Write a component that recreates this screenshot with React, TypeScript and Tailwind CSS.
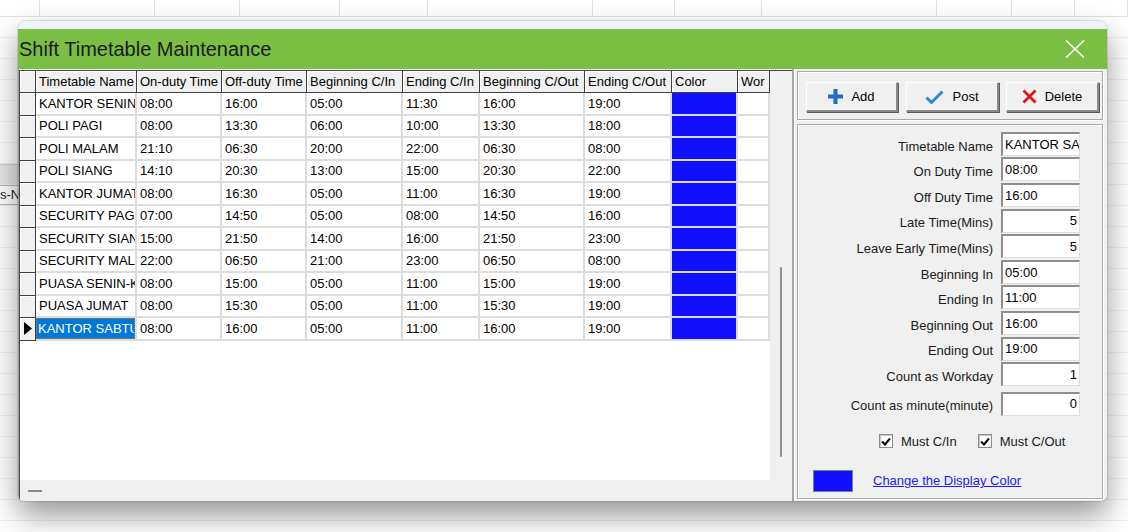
import React from "react";

const BG_COLS = [
  "w-[40px]",
  "w-[115px]",
  "w-[85px]",
  "w-[100px]",
  "w-[88px]",
  "w-[165px]",
  "w-[82px]",
  "w-[87px]",
  "w-[175px]",
  "w-[75px]",
  "w-[63px]",
  "w-[53px]",
];

const HEADERS = [
  "Timetable Name",
  "On-duty Time",
  "Off-duty Time",
  "Beginning C/In",
  "Ending C/In",
  "Beginning C/Out",
  "Ending C/Out",
  "Color",
  "Wor",
];

// lebar kolom grid, urut sama dengan HEADERS
const COL_W = [
  "w-[101px]",
  "w-[85px]",
  "w-[85px]",
  "w-[96px]",
  "w-[77px]",
  "w-[105px]",
  "w-[87px]",
  "w-[66px]",
  "w-[32px]",
];

const ROWS = [
  ["KANTOR SENIN", "08:00", "16:00", "05:00", "11:30", "16:00", "19:00"],
  ["POLI PAGI", "08:00", "13:30", "06:00", "10:00", "13:30", "18:00"],
  ["POLI MALAM", "21:10", "06:30", "20:00", "22:00", "06:30", "08:00"],
  ["POLI SIANG", "14:10", "20:30", "13:00", "15:00", "20:30", "22:00"],
  ["KANTOR JUMAT", "08:00", "16:30", "05:00", "11:00", "16:30", "19:00"],
  ["SECURITY PAGI", "07:00", "14:50", "05:00", "08:00", "14:50", "16:00"],
  ["SECURITY SIANG", "15:00", "21:50", "14:00", "16:00", "21:50", "23:00"],
  ["SECURITY MALAM", "22:00", "06:50", "21:00", "23:00", "06:50", "08:00"],
  ["PUASA SENIN-KAMIS", "08:00", "15:00", "05:00", "11:00", "15:00", "19:00"],
  ["PUASA JUMAT", "08:00", "15:30", "05:00", "11:00", "15:30", "19:00"],
  ["KANTOR SABTU", "08:00", "16:00", "05:00", "11:00", "16:00", "19:00"],
];

const FIELDS = [
  { label: "Timetable Name", value: "KANTOR SABTU", num: false },
  { label: "On Duty Time", value: "08:00", num: false },
  { label: "Off Duty Time", value: "16:00", num: false },
  { label: "Late Time(Mins)", value: "5", num: true },
  { label: "Leave Early Time(Mins)", value: "5", num: true },
  { label: "Beginning In", value: "05:00", num: false },
  { label: "Ending In", value: "11:00", num: false },
  { label: "Beginning Out", value: "16:00", num: false },
  { label: "Ending Out", value: "19:00", num: false },
  { label: "Count as Workday", value: "1", num: true },
];

const HEAD =
  "shrink-0 h-full bg-[#f0f0f0] border-r border-b border-[#404040] shadow-[inset_1px_1px_0_#ffffff] flex items-center overflow-hidden whitespace-nowrap";
const CELL_BASE =
  "shrink-0 h-full border-r-2 border-b-2 border-[#dcdcdc] flex items-center overflow-hidden whitespace-nowrap";
const CELL = `${CELL_BASE} pl-[3px]`;
const GROUP =
  "border border-[#a9a9a9] shadow-[inset_1px_1px_0_#ffffff,1px_1px_0_#ffffff]";
const BTN =
  "h-[30px] flex items-center justify-center gap-[8px] bg-[#f0f0f0] border-t border-l border-t-white border-l-white border-r-2 border-b-2 border-r-[#8a8a8a] border-b-[#8a8a8a] shadow-[1px_1px_0_#5a5a5a] text-[13px] text-black";
const INPUT =
  "w-[79px] h-[24px] bg-white border-t-2 border-l-2 border-r border-b border-t-[#8e8e8e] border-l-[#8e8e8e] border-r-[#dedede] border-b-[#dedede] flex items-center overflow-hidden whitespace-nowrap text-[13px] text-black";

function Background() {
  return (
    <div className="absolute inset-0 flex flex-col bg-white">
      <div className="flex h-[17px] shrink-0">
        {BG_COLS.map((w, i) => (
          <div key={i} className={`${w} shrink-0 border-r border-b border-[#e1e1e1]`} />
        ))}
      </div>
      {Array.from({ length: 24 }).map((_, r) => (
        <div key={r} className="flex h-[21px] shrink-0 border-b border-[#f1f1f1]">
          <div
            className={`w-[40px] shrink-0 h-full ${
              r === 7 ? "bg-[#e6e6e6] border-t border-[#d0d0d0]" : ""
            } ${r === 8 ? "border-t border-b border-[#b5b5b5] text-[13px] text-[#222] flex items-center" : ""}`}
          >
            {r === 8 ? "s-No" : null}
          </div>
        </div>
      ))}
    </div>
  );
}

function Grid() {
  return (
    <div className="w-[750px] h-[409px] bg-white flex flex-col overflow-hidden text-[13px] text-black">
      <div className="flex h-[22px] shrink-0">
        <div className={`w-[16px] ${HEAD}`} />
        {HEADERS.map((h, i) => (
          <div key={h} className={`${COL_W[i]} ${HEAD} pl-[3px]`}>
            {h}
          </div>
        ))}
      </div>
      {ROWS.map((row, r) => {
        const last = r === ROWS.length - 1;
        return (
          <div key={r} className="flex h-[22.5px] shrink-0">
            <div className={`w-[16px] ${HEAD} justify-center`}>
              {last && (
                <svg width="8" height="13" viewBox="0 0 8 13">
                  <polygon points="0,0 8,6.5 0,13" fill="#000" />
                </svg>
              )}
            </div>
            {row.map((v, c) =>
              last && c === 0 ? (
                <div key={c} className={`${COL_W[c]} ${CELL_BASE}`}>
                  <div className="w-full h-full bg-[#0078d7] text-white border border-dotted border-[#c27a3a] flex items-center pl-[1px] overflow-hidden">
                    {v}
                  </div>
                </div>
              ) : (
                <div key={c} className={`${COL_W[c]} ${CELL}`}>
                  {v}
                </div>
              )
            )}
            <div className={`${COL_W[7]} ${CELL} bg-[#1010ff]`} />
            <div className={`${COL_W[8]} ${CELL}`} />
          </div>
        );
      })}
    </div>
  );
}

function Checkbox({ label }: { label: string }) {
  return (
    <div className="flex items-center gap-[8px]">
      <div className="w-[14px] h-[14px] bg-white border border-[#8a8a8a] shadow-[inset_1px_1px_0_#c8c8c8] flex items-center justify-center">
        <svg width="10" height="9" viewBox="0 0 10 9">
          <path d="M1 4.5 L4 7.5 L9 1.5" stroke="#000" strokeWidth="2" fill="none" />
        </svg>
      </div>
      <span className="text-[13px] text-[#1a1a1a]">{label}</span>
    </div>
  );
}

function RightPanel() {
  return (
    <div className="w-[315px] h-full border-l-2 border-l-[#a6a6a6] shadow-[inset_1px_0_0_#ffffff] pl-[3px] pr-[4px] pt-[2px] pb-[2px] flex flex-col">
      <div className={`${GROUP} h-[49px] shrink-0 pl-[8px] pt-[10px] flex items-start`}>
        <button className={`${BTN} w-[92px]`}>
          <svg width="15" height="15" viewBox="0 0 15 15">
            <rect x="5.5" y="0" width="4" height="15" fill="#1c6dd0" />
            <rect x="0" y="5.5" width="15" height="4" fill="#1c6dd0" />
          </svg>
          <span>Add</span>
        </button>
        <button className={`${BTN} w-[93px] ml-[8px]`}>
          <svg width="19" height="14" viewBox="0 0 19 14">
            <path d="M1.5 7.5 L6.5 12.5 L17.5 1.5" stroke="#3186de" strokeWidth="3" fill="none" strokeLinejoin="round" />
          </svg>
          <span>Post</span>
        </button>
        <button className={`${BTN} w-[93px] ml-[7px]`}>
          <svg width="15" height="15" viewBox="0 0 15 15">
            <path d="M1.5 1.5 L13.5 13.5 M13.5 1.5 L1.5 13.5" stroke="#e3141c" strokeWidth="2.8" />
          </svg>
          <span>Delete</span>
        </button>
      </div>

      <div className={`${GROUP} mt-[4px] flex-1 flex flex-col pt-[6px]`}>
        {FIELDS.map((f) => (
          <div key={f.label} className="h-[25.6px] shrink-0 flex items-center justify-end pr-[22px]">
            <span className="mt-[5px] text-[13px] text-[#1a1a1a] whitespace-nowrap">{f.label}</span>
            <div className={`${INPUT} ml-[8px] ${f.num ? "justify-end pr-[2px]" : "pl-[2px]"}`}>
              {f.value}
            </div>
          </div>
        ))}
        <div className="h-[25.6px] shrink-0 mt-[4px] flex items-center justify-end pr-[22px]">
          <span className="mt-[5px] text-[13px] text-[#1a1a1a] whitespace-nowrap">
            Count as minute(minute)
          </span>
          <div className={`${INPUT} ml-[8px] justify-end pr-[2px]`}>0</div>
        </div>

        <div className="mt-[15px] pl-[81px] flex items-center gap-[21px]">
          <Checkbox label="Must C/In" />
          <Checkbox label="Must C/Out" />
        </div>

        <div className="mt-[19px] pl-[15px] flex items-center gap-[20px]">
          <div className="w-[40px] h-[22px] bg-[#1010ff] border border-[#7a7a9a]" />
          <span className="text-[13px] text-[#1a1aff] underline">Change the Display Color</span>
        </div>
      </div>
    </div>
  );
}

export default function App() {
  return (
    <div className="relative w-[1128px] h-[532px] overflow-hidden font-['Liberation_Sans',Arial,sans-serif]">
      <Background />

      {/* jendela dialog */}
      <div className="absolute left-[18px] top-[21px] w-[1089px] h-[480px] rounded-t-[8px] rounded-b-[6px] overflow-hidden bg-[#f0f0f0] flex flex-col shadow-[0_14px_30px_rgba(0,0,0,0.42),0_0_0_1px_rgba(0,0,0,0.1)]">
        <div className="h-[8px] shrink-0 bg-[#eff2f8]" />
        <div className="h-[40px] shrink-0 bg-[#7abf44] flex items-center justify-between pl-[1px] pr-[22px]">
          <span className="text-[20px] text-[#1a1a1a] leading-none">Shift Timetable Maintenance</span>
          <svg width="20" height="18" viewBox="0 0 20 18">
            <path d="M1 0.5 L19 17.5 M19 0.5 L1 17.5" stroke="#ffffff" strokeWidth="1.6" />
          </svg>
        </div>

        <div className="flex-1 flex min-h-0">
          {/* panel kiri: grid */}
          <div className="w-[774px] h-full border-l border-[#9c9c9c] pt-[1px] flex flex-col">
            <div className="flex-1 flex flex-col border-t border-l border-[#4a4a4a]">
              <div className="flex">
                <Grid />
                <div className="w-[22px] h-[409px] flex justify-center pt-[196px]">
                  <div className="w-[2px] h-[190px] rounded-full bg-[#8f8f8f]" />
                </div>
              </div>
              <div className="flex-1 flex items-center pl-[8px]">
                <div className="w-[14px] h-[2px] bg-[#8a8a8a]" />
              </div>
            </div>
          </div>

          <RightPanel />
        </div>
      </div>
    </div>
  );
}
